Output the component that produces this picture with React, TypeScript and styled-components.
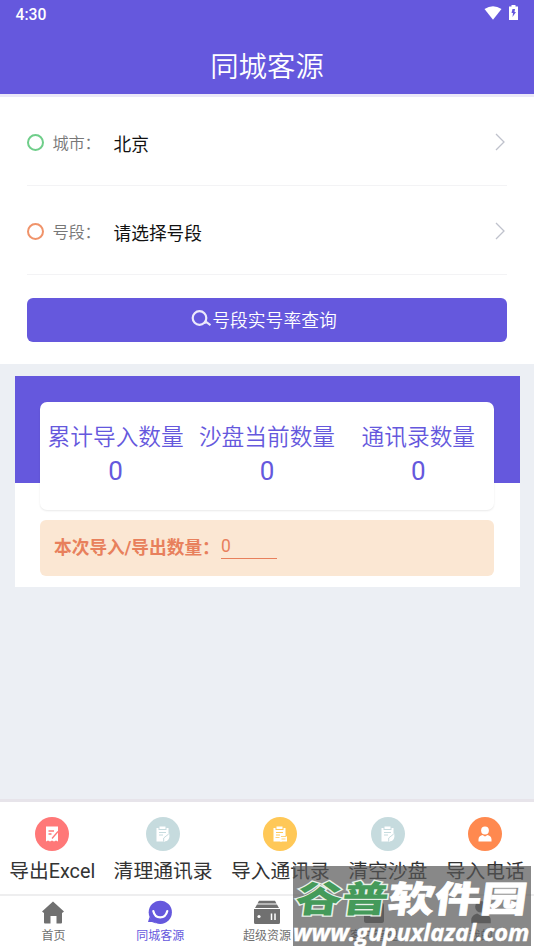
import React from "react";
import styled, { createGlobalStyle } from "styled-components";

const Global = createGlobalStyle`
  * { box-sizing: border-box; }
  html, body { margin: 0; padding: 0; }
  body { font-family: Roboto, "Noto Sans CJK SC", sans-serif; background: #eceff5; }
`;

const Screen = styled.div`
  position: relative;
  width: 534px;
  height: 950px;
  display: flex;
  flex-direction: column;
  overflow: hidden;
  background: #eceff4;
`;

const Header = styled.header`
  height: 97px;
  flex: none;
  background: #6558dd;
  border-bottom: 3px solid #ebe8f8;
  color: #fff;
`;

const StatusBar = styled.div`
  height: 28px;
  padding: 0 16px 0 15.5px;
  display: flex;
  align-items: center;
  justify-content: space-between;
  font-size: 15.7px;
  font-weight: 500;
`;

const StatusIcons = styled.div`
  display: flex;
  align-items: center;
  gap: 7px;
  margin-top: -3px;
`;

const Title = styled.h1`
  margin: 0;
  height: 66px;
  padding-top: 6px;
  display: flex;
  align-items: center;
  justify-content: center;
  font-size: 28.4px;
  font-weight: 350;
`;

const Form = styled.section`
  height: 267px;
  flex: none;
  padding: 0 27px;
  background: #fff;
  display: flex;
  flex-direction: column;
`;

const Field = styled.div`
  height: 89px;
  padding: 2px 1px 0 0;
  display: flex;
  align-items: center;
  border-bottom: 1px solid #f3f3f5;
`;

const Ring = styled.span<{ $color: string }>`
  width: 17px;
  height: 17px;
  border: 2.5px solid ${(p) => p.$color};
  border-radius: 50%;
`;

const FieldLabel = styled.span`
  width: 61px;
  margin: -1px 0 0 8.5px;
  font-size: 16.3px;
  letter-spacing: -0.3px;
  font-weight: 350;
  color: #777;
  white-space: nowrap;
`;

const FieldValue = styled.span`
  flex: 1;
  margin: 1px 0 0;
  font-size: 17.7px;
  color: #111;
`;

const QueryButton = styled.button`
  height: 44px;
  margin: 23px 0 0;
  padding: 0 6px 2px 0;
  border: 0;
  border-radius: 6px;
  background: #6558dd;
  color: #fff;
  font: inherit;
  font-size: 17.8px;
  font-weight: 350;
  display: flex;
  align-items: center;
  justify-content: center;
  gap: 1px;
`;

const Panel = styled.section`
  flex: none;
  width: 505px;
  height: 211px;
  margin: 12px 0 0 14.5px;
  padding: 26px 25.5px 0;
  background: linear-gradient(#6558dd 0 107px, #fff 107px);
`;

const Stats = styled.div`
  height: 108px;
  display: grid;
  grid-template-columns: repeat(3, 1fr);
  background: #fff;
  border-radius: 7px;
  box-shadow: 0 1px 2px rgba(0, 0, 0, 0.09);
  color: #6558dd;
`;

const Stat = styled.div`
  display: flex;
  flex-direction: column;
  align-items: center;
  padding-top: 18px;
  white-space: nowrap;
`;

const StatName = styled.span`
  font-size: 22.7px;
  font-weight: 350;
  line-height: 35px;
`;

const StatValue = styled.span`
  font-size: 26px;
  line-height: 33px;
`;

const Notice = styled.div`
  height: 56px;
  margin-top: 10px;
  padding: 0 14px;
  display: flex;
  align-items: center;
  border-radius: 6px;
  background: #fbe7d3;
  color: #e8805c;
`;

const NoticeLabel = styled.b`
  width: 167px;
  white-space: nowrap;
  font-size: 17.7px;
  margin-top: -4px;
`;

const Count = styled.span`
  width: 56px;
  height: 25px;
  margin-top: -3px;
  border-bottom: 1px solid #e8805c;
  font-size: 17.5px;
  line-height: 24px;
`;

const Actions = styled.section`
  flex: none;
  height: 97px;
  margin-top: auto;
  display: flex;
  justify-content: space-around;
  background: #fff;
  border-top: 3px solid #e7e4ea;
  border-bottom: 2px solid #eeeeef;
`;

const Action = styled.div`
  display: flex;
  flex-direction: column;
  align-items: center;
  padding-top: 15px;
  font-size: 19.8px;
  line-height: 28px;
  color: #333;
  white-space: nowrap;
`;

const ActionLabel = styled.span`
  margin-top: 7px;
`;

const Disc = styled.span<{ $color: string }>`
  width: 34px;
  height: 34px;
  border-radius: 50%;
  background: ${(p) => p.$color};
  color: ${(p) => p.$color};
  display: grid;
  place-items: center;
`;

const Nav = styled.nav`
  flex: none;
  height: 54px;
  display: grid;
  grid-template-columns: repeat(5, 1fr);
  background: #fff;
`;

const NavItem = styled.div<{ $active?: boolean }>`
  display: flex;
  flex-direction: column;
  align-items: center;
  padding-top: 4px;
  font-size: 12px;
  line-height: 18px;
  color: ${(p) => (p.$active ? "#6558dd" : "#707070")};
`;

const NavLabel = styled.span`
  margin-top: 3px;
  white-space: nowrap;
`;

const Stamp = styled.aside`
  position: absolute;
  left: 293px;
  top: 866px;
  width: 238px;
  height: 80px;
  background: rgba(85, 85, 85, 0.7);
  color: #fff;
  white-space: nowrap;
`;

const StampName = styled.div`
  width: 190px;
  height: 54px;
  padding-left: 3px;
  font: 900 36px/60px "Noto Sans CJK SC", sans-serif;
  transform: scaleX(1.285) skewX(-6deg);
  transform-origin: 0 50%;
  -webkit-text-stroke: 0.6px #fff;
`;

const StampGreen = styled.span`
  color: #459a5a;
  -webkit-text-stroke: 2.6px #e8f1e9;
  paint-order: stroke fill;
`;

const StampSite = styled.div`
  width: 238px;
  font: italic 700 23.6px/24px "Open Sans", sans-serif;
  -webkit-text-stroke: 0.4px #fff;
`;

const Chevron = () => (
  <svg width="12" height="18" viewBox="0 0 12 18" fill="none" stroke="#bfc2cc" strokeWidth="1.3">
    <path d="M2 1l8 8-8 8" />
  </svg>
);

const SearchIcon = () => (
  <svg width="20" height="18" viewBox="0 0 20 18" fill="none" stroke="#ece9fb">
    <circle cx="8.5" cy="8" r="6.8" strokeWidth="2.2" />
    <path d="M13 13l2.500-.8 4 3" strokeWidth="2" />
  </svg>
);

const ExportIcon = () => (
  <svg width="16" height="16" viewBox="0 0 16 16">
    <path fill="#fff" d="M2 .5h12v15l-2-1-2 1-2-1-2 1-2-1-2 1z" />
    <path d="M4.500 5h5.500M4.500 8h3M8 12.500l6-7" stroke="currentColor" strokeWidth="1.300" />
  </svg>
);

const ClipIcon = ({ box = false }: { box?: boolean }) => (
  <svg width="16" height="16" viewBox="0 0 16 16">
    <path fill="#fff" d="M1.500 2h2v2h8V2h2v6L10 12v3.500H1.500zM4.500 .5h6V3h-6z" />
    <path d="M4 6.500h7M4 9h4" stroke="currentColor" />
    {box ? (
      <path fill="#fff" d="M8 8h5.500v2H15v5.500H8z" />
    ) : (
      <path fill="#fff" d="M14 7c1.500 5-1 8.500-5 8.500l1-5z" />
    )}
    {box ? (
      <path d="M3.500 11.500h4M9 10.500h5.500M9.500 13h4" stroke="currentColor" strokeWidth=".8" />
    ) : (
      <path d="M8.700 15.500v-3.500l5-4" fill="none" stroke="currentColor" />
    )}
  </svg>
);

const PersonIcon = ({ size = 16 }: { size?: number }) => (
  <svg width={size} height={size} viewBox="0 0 16 16" fill={size === 16 ? "#fff" : "currentColor"}>
    <circle cx="8" cy="4.500" r="3.900" />
    <path d="M1.500 15.500v-2.200c0-2.500 2.400-4 4-4.300L8 10.500 10.500 9c1.600.3 4 1.800 4 4.300v2.200z" />
  </svg>
);

const actions = [
  { label: "导出Excel", color: "#ff7878", icon: <ExportIcon /> },
  { label: "清理通讯录", color: "#c6dbde", icon: <ClipIcon /> },
  { label: "导入通讯录", color: "#ffc857", icon: <ClipIcon box /> },
  { label: "清空沙盘", color: "#c6dbde", icon: <ClipIcon /> },
  { label: "导入电话", color: "#ff894f", icon: <PersonIcon /> },
];

const nav = [
  {
    label: "首页",
    icon: (
      <svg width="24" height="24" viewBox="0 0 24 24" fill="currentColor">
        <path d="M12 1.500l11 10-1.500 1.300H21v9.700q0 1-1 1h-4.500V16h-6v7.500H4q-1 0-1-1v-9.700h-.5L1 11.500z" />
      </svg>
    ),
  },
  {
    label: "同城客源",
    icon: (
      <svg width="24" height="24" viewBox="0 0 24 24">
        <circle cx="12.300" cy="12.300" r="11.600" fill="currentColor" />
        <path fill="currentColor" d="M1.500 17l-1.500 5h4l4 1.500z" />
        <path d="M5.300 11c1.800 8.500 12 8.500 14 0" fill="none" stroke="#fff" strokeWidth="2.200" strokeLinecap="round" />
      </svg>
    ),
  },
  {
    label: "超级资源",
    icon: (
      <svg width="26" height="24" viewBox="0 0 26 24">
        <path fill="currentColor" d="M5 .8h16l1.500 2.700h-19zM3 4.500h20l2 3.500H1zM0 9h26v13.500q0 1.500-1.500 1.500h-23Q0 24 0 22.500z" />
        <path d="M17.500 13.500v6.500M21 13.500v6.500" stroke="#fff" strokeWidth="1.500" />
        <circle cx="5" cy="16.500" r="1.600" fill="#fff" />
      </svg>
    ),
  },
  {
    label: "客户管理",
    icon: (
      <svg width="20" height="24" viewBox="0 0 20 24">
        <rect y="3" width="20" height="20" rx="2" fill="currentColor" />
        <path d="M7 12h7" stroke="#fff" />
      </svg>
    ),
  },
  { label: "我的", icon: <PersonIcon size={24} /> },
];

export default function App() {
  return (
    <Screen lang="zh-CN">
      <Global />
      <Header>
        <StatusBar>
          <span>4:30</span>
          <StatusIcons>
            <svg width="18" height="14" viewBox="0 0 18 14" fill="#fff">
              <path d="M.5 3Q9-2.500 17.500 3L9 13.800z" />
            </svg>
            <svg width="9" height="15" viewBox="0 0 9 15">
              <path fill="#fff" d="M0 1.500h2.500V0h4v1.500H9V15H0z" />
              <path fill="#6558dd" d="M3.500 4h2.500L5.500 7H7l-3.500 5 .5-4H2.500z" />
            </svg>
          </StatusIcons>
        </StatusBar>
        <Title>同城客源</Title>
      </Header>
      <Form>
        <Field>
          <Ring $color="#6fce8a" />
          <FieldLabel>城市：</FieldLabel>
          <FieldValue>北京</FieldValue>
          <Chevron />
        </Field>
        <Field>
          <Ring $color="#f0936a" />
          <FieldLabel>号段：</FieldLabel>
          <FieldValue>请选择号段</FieldValue>
          <Chevron />
        </Field>
        <QueryButton>
          <SearchIcon />
          号段实号率查询
        </QueryButton>
      </Form>
      <Panel>
        <Stats>
          {["累计导入数量", "沙盘当前数量", "通讯录数量"].map((name) => (
            <Stat key={name}>
              <StatName>{name}</StatName>
              <StatValue>0</StatValue>
            </Stat>
          ))}
        </Stats>
        <Notice>
          <NoticeLabel>本次导入/导出数量：</NoticeLabel>
          <Count>0</Count>
        </Notice>
      </Panel>
      <Actions>
        {actions.map((a) => (
          <Action key={a.label}>
            <Disc $color={a.color}>{a.icon}</Disc>
            <ActionLabel>{a.label}</ActionLabel>
          </Action>
        ))}
      </Actions>
      <Nav>
        {nav.map((n, i) => (
          <NavItem key={n.label} $active={i === 1}>
            {n.icon}
            <NavLabel>{n.label}</NavLabel>
          </NavItem>
        ))}
      </Nav>
      <Stamp>
        <StampName>
          <StampGreen>谷普</StampGreen>软件园
        </StampName>
        <StampSite>www.gupuxlazal.com</StampSite>
      </Stamp>
    </Screen>
  );
}
